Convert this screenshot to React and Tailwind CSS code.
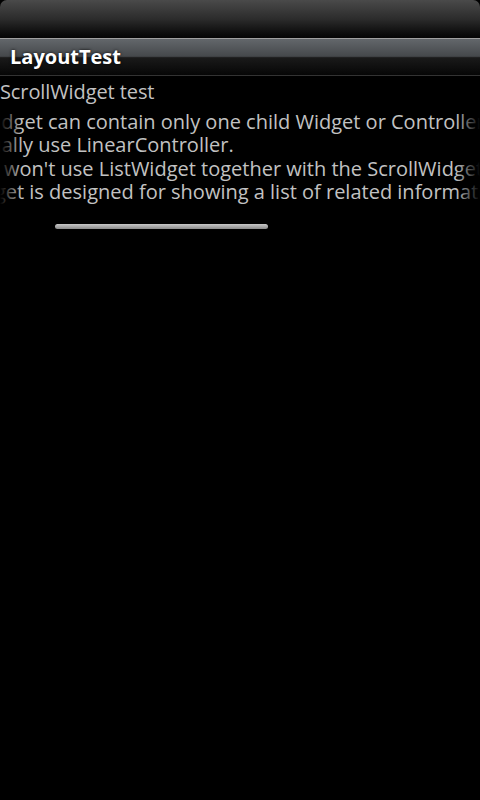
import React from 'react';

const lines = [
  'ScrollWidget can contain only one child Widget or Controller.',
  'You usually use LinearController.',
  "But you won't use ListWidget together with the ScrollWidget.",
  'ListWidget is designed for showing a list of related information.',
];

const App = () => {
  return (
    <div className="h-[800px] w-[480px] overflow-hidden bg-black" style={{ fontFamily: '"Open Sans", "DejaVu Sans", sans-serif' }}>
      <div className="h-[38px] rounded-t-[7px] bg-gradient-to-b from-[#4a4a4a] via-[#2c2c2c] to-[#050505]" />
      <div className="h-[38px] border-t border-[#a0a0a0] border-b border-b-[#333] bg-[linear-gradient(to_bottom,#63676b_0%,#45484b_48%,#1a1a1a_52%,#060606_100%)] flex items-center px-[10px]">
        <span className="text-[20px] font-bold leading-none text-white [text-shadow:0_0_3px_rgba(0,0,0,0.9)]">LayoutTest</span>
      </div>
      <div className="text-[20px] leading-[23.5px] text-[#c2c2c2] pt-[4px]">
        <div className="tracking-[-0.1px]">ScrollWidget test</div>
        <div className="relative mt-[6px] overflow-hidden">
          <div className="ml-[-73px] w-max whitespace-nowrap">
            {lines.map((l) => (
              <div key={l}>{l}</div>
            ))}
          </div>
          <div className="absolute inset-y-0 left-0 w-[22px] bg-gradient-to-r from-black to-transparent" />
          <div className="absolute inset-y-0 right-0 w-[24px] bg-gradient-to-l from-black to-transparent" />
        </div>
        <div className="h-[20px]" />
        <div className="ml-[55px] h-[5px] w-[213px] rounded-full bg-gradient-to-b from-[#c8c8c8] to-[#8a8a8a]" />
      </div>
    </div>
  );
};

export default App;
